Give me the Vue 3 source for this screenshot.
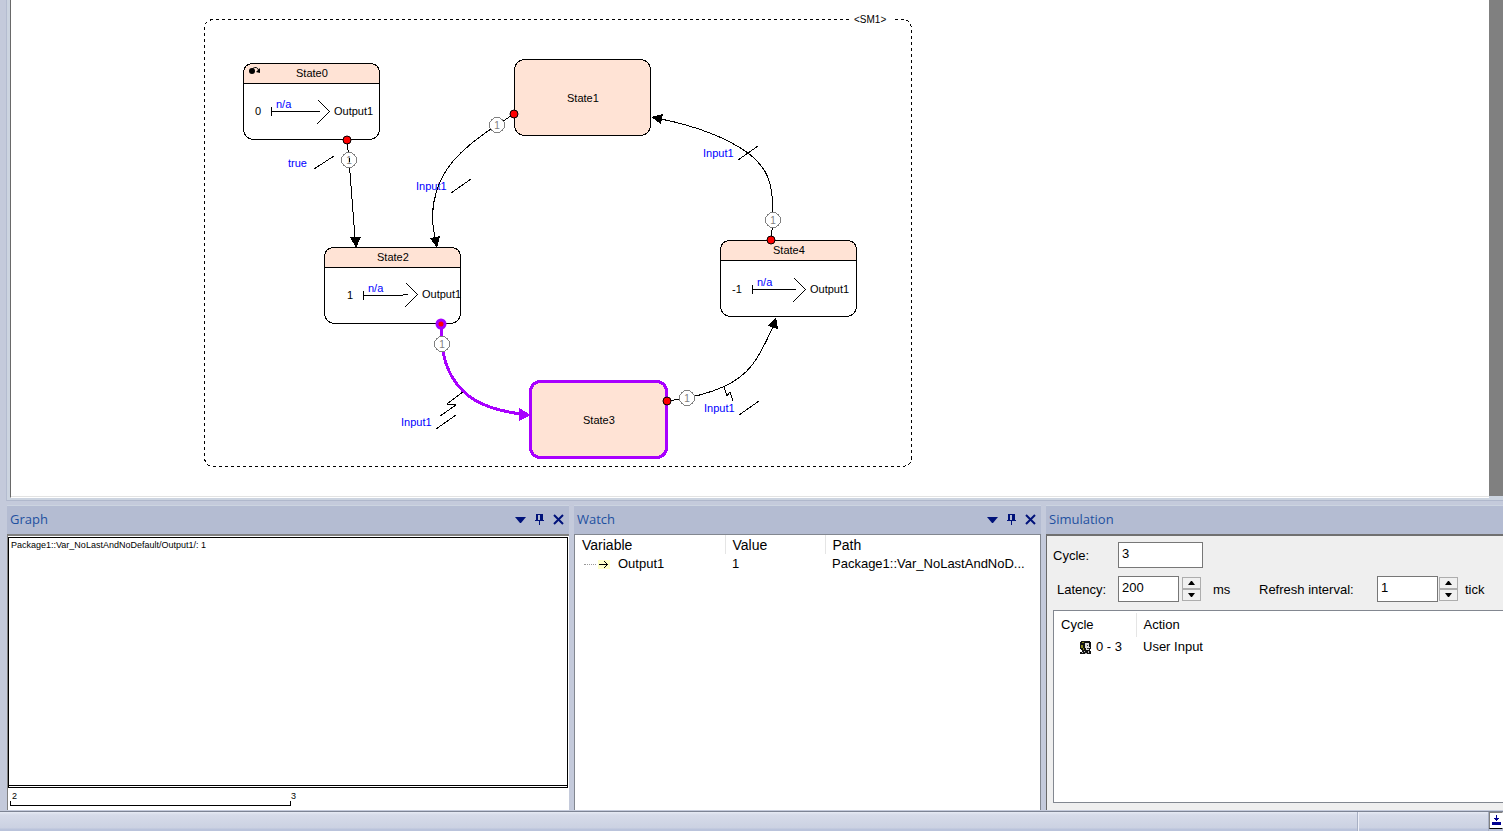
<script setup>
import { ref } from 'vue'

const states = [
  { name: 'State0', x: 243, y: 63, labelX: 296, value: '0', valueX: 255, flow: 271, initial: true },
  { name: 'State1', x: 514, y: 59, labelX: 567 },
  { name: 'State2', x: 324, y: 247, labelX: 377, value: '1', valueX: 347, flow: 363 },
  { name: 'State3', x: 530, y: 381, labelX: 583, active: true },
  { name: 'State4', x: 720, y: 240, labelX: 773, value: '-1', valueX: 732, flow: 752 },
]

const flows = [
  { line: 'M271.5 107V116M271 111.5H320', head: 'M318 100L329.5 111.5L317 124', na: [276, 108], out: [334, 115] },
  { line: 'M363.5 291V300M363 295.5H403M403 294.5H408', head: 'M406 283L417.5 294.5L405 307', na: [368, 292], out: [422, 298] },
  { line: 'M752.5 285V294M752 289.5H796', head: 'M794 278L805.5 289.5L793 302', na: [757, 286], out: [810, 293] },
]

const edges = [
  { path: 'M347 140L349 160L355 238', head: '350,237 361,237 356,248', dot: [347, 140], badge: [349, 160], label: 'true', at: [288, 167], slash: 'M314 169L334 156' },
  { path: 'M514 114L497 125C455 152 442 172 436 193C431 210 432 225 435 238', head: '430,238 440,236 437,248', dot: [514, 114], badge: [497, 125], label: 'Input1', at: [416, 190], slash: 'M451 193L471 179' },
  { path: 'M441 324L442 344C444 365 451 379 463 391C478 406 500 411 521 414', head: '519,408 531,415 519,421', dot: [441, 324], badge: [442, 344], label: 'Input1', at: [401, 426], slash: 'M436 429L456 415', zigzag: 'M463 392L447 404L456 405L440 416', active: true },
  { path: 'M667 401L687 398C725 390 745 378 757 358C766 343 769 335 773 327', head: '768,326 778,329 776,317', dot: [667, 401], badge: [687, 398], label: 'Input1', at: [704, 412], slash: 'M739 415L759 401', zigzag: 'M724 387L727 396L730 392L733 401' },
  { path: 'M771 240L773 220C774 180 766 167 748 153C727 138 695 126 661 119', head: '651,117 663,114 661,124', dot: [771, 240], badge: [773, 220], label: 'Input1', at: [703, 157], slash: 'M738 160L758 146' },
]

const cycle = ref('3')
const latency = ref(200)
const refresh = ref(1)
</script>

<template>
  <div class="app">
    <main class="workspace">
      <div class="canvas">
        <svg class="diagram" aria-label="State machine SM1">
          <g transform="translate(-11 0)">
            <path class="boundary" d="M849 19.5H214.5Q204.500 19.5 204.500 29.5V456.500Q204.500 466.500 214.500 466.500H901.500Q911.500 466.500 911.500 456.500V29.500Q911.500 19.500 901.500 19.500H893" />
            <text class="machine" x="854" y="23">&lt;SM1&gt;</text>

            <g v-for="s in states" :key="s.name">
              <rect :class="['state', { composite: s.value, active: s.active }]" :x="s.x + 0.5" :y="s.y + 0.5" width="136" height="76" rx="10" />
              <path v-if="s.value" class="cap" :transform="`translate(${s.x} ${s.y})`" d="M0.5 20.5V10.5Q0.5 0.5 10.500 0.5H126.500Q136.500 0.5 136.500 10.500V20.500Z" />
              <text :x="s.labelX" :y="s.value ? s.y + 14 : s.y + 43">{{ s.name }}</text>
              <text v-if="s.value" :x="s.valueX" :y="s.y + (s.name === 'State4' ? 53 : 52)">{{ s.value }}</text>
            </g>
            <g class="initial">
              <circle cx="252" cy="71" r="3" />
              <path class="stroke" d="M252 69Q257 65 259 71" />
              <path d="M256 72L260 73V68Z" />
            </g>

            <g v-for="(f, i) in flows" :key="i">
              <path class="stroke" :d="f.line" />
              <path class="stroke" :d="f.head" />
              <text class="blue" :x="f.na[0]" :y="f.na[1]">n/a</text>
              <text :x="f.out[0]" :y="f.out[1]">Output1</text>
            </g>

            <g v-for="(e, i) in edges" :key="'e' + i" :class="{ live: e.active }">
              <text class="blue" :x="e.at[0]" :y="e.at[1]">{{ e.label }}</text>
              <path class="stroke edge" :d="e.path" />
              <polygon class="head" :points="e.head" />
              <path class="stroke" :d="e.slash" />
              <path v-if="e.zigzag" class="stroke" :d="e.zigzag" />
              <circle class="badge" :cx="e.badge[0]" :cy="e.badge[1]" r="7.5" />
              <text class="order" :x="e.badge[0]" :y="e.badge[1] + 4">1</text>
              <path v-if="i === 0" class="stroke" d="M349 158V162" />
              <circle class="dot" :cx="e.dot[0]" :cy="e.dot[1]" r="4" />
            </g>
          </g>
        </svg>
      </div>
      <div class="backdrop"></div>
    </main>

    <div class="docks">
      <section class="panel graph">
        <header>
          <h2>Graph</h2>
          <button aria-label="Graph menu"><svg width="11" height="11"><path d="M0 3H11L6 9H5Z" /></svg></button>
          <button aria-label="Pin Graph"><svg width="11" height="11"><path d="M2 0H9V6H10V7H6V11H5V7H1V6H2ZM4 1V6H6V1Z" fill-rule="evenodd" /></svg></button>
          <button aria-label="Close Graph"><svg width="11" height="11"><path class="x" d="M1 1L10 10M10 1L1 10" /></svg></button>
        </header>
        <div class="body">
          <div class="plot"><span>Package1::Var_NoLastAndNoDefault/Output1/: 1</span></div>
          <div class="ruler">
            <span>2</span>
            <i></i>
            <span>3</span>
          </div>
        </div>
      </section>

      <section class="panel watch">
        <header>
          <h2>Watch</h2>
          <button aria-label="Watch menu"><svg width="11" height="11"><path d="M0 3H11L6 9H5Z" /></svg></button>
          <button aria-label="Pin Watch"><svg width="11" height="11"><path d="M2 0H9V6H10V7H6V11H5V7H1V6H2ZM4 1V6H6V1Z" fill-rule="evenodd" /></svg></button>
          <button aria-label="Close Watch"><svg width="11" height="11"><path class="x" d="M1 1L10 10M10 1L1 10" /></svg></button>
        </header>
        <div class="body">
          <table>
            <colgroup><col class="c-var"><col class="c-val"><col></colgroup>
            <thead><tr><th>Variable</th><th>Value</th><th>Path</th></tr></thead>
            <tbody>
              <tr>
                <td>
                  <span class="tree">
                    <i class="dots"></i>
                    <svg width="12" height="9"><path d="M1 4.500H10M6 1L9.500 4.500L6 8" /></svg>
                    Output1
                  </span>
                </td>
                <td>1</td>
                <td>Package1::Var_NoLastAndNoD...</td>
              </tr>
            </tbody>
          </table>
        </div>
      </section>

      <section class="panel simulation">
        <header><h2>Simulation</h2></header>
        <div class="body">
          <div class="row">
            <label for="cycle">Cycle:</label>
            <input id="cycle" v-model="cycle" class="wide" type="text">
          </div>
          <div class="row">
            <label for="latency" class="inset">Latency:</label>
            <input id="latency" v-model="latency" type="text">
            <span class="spin">
              <button aria-label="Increase latency" @click="latency++"><svg width="7" height="4"><path d="M0 4H7L4 0H3Z" /></svg></button>
              <button aria-label="Decrease latency" @click="latency--"><svg width="7" height="4"><path d="M0 0H7L4 4H3Z" /></svg></button>
            </span>
            <span class="unit">ms</span>
            <label for="refresh" class="refresh">Refresh interval:</label>
            <input id="refresh" v-model="refresh" type="text">
            <span class="spin tight">
              <button aria-label="Increase interval" @click="refresh++"><svg width="7" height="4"><path d="M0 4H7L4 0H3Z" /></svg></button>
              <button aria-label="Decrease interval" @click="refresh--"><svg width="7" height="4"><path d="M0 0H7L4 4H3Z" /></svg></button>
            </span>
            <span class="tick">tick</span>
          </div>
          <div class="list">
            <table>
              <colgroup><col class="c-cyc"><col></colgroup>
              <thead><tr><th>Cycle</th><th>Action</th></tr></thead>
              <tbody>
                <tr>
                  <td>
                    <span class="user">
                      <svg width="12" height="13" shape-rendering="crispEdges">
                        <path d="M1 0H10V1H11V8H10V10H11V13H0V11H2V9H1V8H0V1H1Z" fill="#111" />
                        <path d="M5 2H9V6H10V7H9V9H6V7H5Z" fill="#ddd" />
                        <path d="M7 4H8V5H7ZM7 7H9V8H7Z" fill="#333" />
                        <path d="M2 1H4V2H2ZM1 4H3V7H1ZM3 7H4V9H3Z" fill="#8a8a20" />
                        <path d="M2 11H3V12H2ZM4 10H5V11H4ZM5 12H7V13H5ZM8 10H9V12H8Z" fill="#bbb" />
                      </svg>
                      0 - 3
                    </span>
                  </td>
                  <td>User Input</td>
                </tr>
              </tbody>
            </table>
          </div>
        </div>
      </section>
    </div>

    <footer class="status">
      <span class="cell"></span>
      <button aria-label="Output to bar">
        <svg width="9" height="11" shape-rendering="crispEdges"><path d="M4 0H5V3H7V4H6V5H5V6H4V5H3V4H2V3H4ZM0 7H9V10H0Z" /></svg>
      </button>
    </footer>
  </div>
</template>

<style>
html, body { margin: 0; background: #c4cadb; }
</style>

<style scoped>
* { box-sizing: border-box; }
.app {
  display: flex; flex-direction: column; min-height: 100vh; overflow: hidden;
  background: #c4cadb; color: #000;
  font: 13px/18px Arial, "Liberation Sans", sans-serif;
}
button { padding: 0; font: inherit; cursor: default; }

.workspace {
  display: flex; margin-left: 6px; padding-left: 3px;
  border-left: 1px solid #b4bcd0; border-bottom: 1px solid #b0b8cc;
  background: #ccd4e0;
}
.canvas { flex: 1; border-left: 1px solid #696969; background: #fff; border-bottom: 1px solid #fff; box-shadow: inset 0 -1px #e3e3e3; margin-bottom: 2px; }
.backdrop { width: 14px; background: #808080; margin-bottom: 4px; }
.diagram { display: block; width: 100%; height: 497px; shape-rendering: crispEdges; }
.diagram text { font-size: 11px; fill: #000; }
.diagram .machine { font-size: 10px; }
.diagram .blue { fill: #00f; }
.diagram .order { font-size: 10px; fill: #808080; text-anchor: middle; }
.boundary { fill: none; stroke: #000; stroke-dasharray: 3 3; }
.state { fill: #ffe3d5; stroke: #000; }
.state.composite { fill: #fff; }
.state.active { stroke: #a800ff; stroke-width: 3; }
.cap { fill: #ffe3d5; stroke: #000; }
.stroke { fill: none; stroke: #000; }
.initial { shape-rendering: geometricPrecision; }
.dot { fill: #f00; stroke: #000; shape-rendering: geometricPrecision; }
.badge { fill: #fff; stroke: #808080; }
.live .edge { stroke: #a800ff; stroke-width: 3; }
.live .head { fill: #a800ff; }
.live .dot { stroke: #a800ff; stroke-width: 3; }

.docks {
  flex: 1; display: grid; gap: 5px; padding: 4px 0 1px 7px;
  grid-template-columns: 562fr 467fr 457fr;
}
.panel { display: flex; flex-direction: column; min-width: 0; border-top: 1px solid #ccd4e0; }
.panel header { display: flex; align-items: center; gap: 8px; height: 28px; padding: 0 5px 2px 3px; background: #b4bcd2; }
.panel h2 { flex: 1; margin: 0; font: 13px/18px "Open Sans", "Noto Sans", sans-serif; color: #1e50a0; }
.panel header button { display: flex; border: 0; background: none; fill: #00127a; }
.x { stroke: #00127a; stroke-width: 2; }
.body { flex: 1; background: #fff; border: 1px solid #828790; }

.graph .body { display: flex; flex-direction: column; border-width: 2px 0 0 1px; border-color: #808080; }
.plot { flex: 1; margin: 1px 1px 0 0; padding: 1px 2px; border: 1px solid #000; border-bottom: 3px double #000; font-size: 9px; line-height: 12px; }
.ruler { display: flex; height: 22px; padding: 2px 4px; font-size: 9px; line-height: 12px; position: relative; }
.ruler i { width: 274px; height: 5px; }
.ruler::after { content: ""; position: absolute; left: 2px; top: 13px; width: 279px; height: 4px; border: 1px solid #000; border-top: 0; }

table { width: 100%; table-layout: fixed; border-collapse: collapse; }
th, td { padding: 0 0 0 7px; text-align: left; font-weight: 400; line-height: 18px; white-space: nowrap; overflow: hidden; }
th + th { border-left: 1px solid #e5e5e5; }
.watch th { font-size: 14px; padding-top: 1px; }
.watch td { padding-top: 1px; }
.c-var { width: 150px; }
.c-val { width: 100px; }
.watch .body { border-bottom: 0; }
.tree { display: flex; align-items: center; }
.dots { width: 12px; margin: 0 2px; border-top: 1px dotted #999; }
.tree svg { margin-right: 8px; background: #ffffc8; fill: none; stroke: #000; }

.simulation .body { display: flex; flex-direction: column; padding: 6px 0 7px 6px; background: #efefef; border-top: 2px solid #707070; border-left-color: #696969; border-right: 0; border-bottom: 0; }
.row { display: flex; align-items: center; height: 26px; margin-bottom: 8px; }
.row label { flex: none; width: 65px; padding-top: 2px; }
.row label.inset { padding-left: 4px; }
.row label.refresh { width: 118px; }
.row input { flex: none; width: 61px; height: 26px; padding: 0 3px 4px; border: 1px solid #777; border-radius: 0; background: #fff; font: inherit; outline: 0; }
.row input.wide { width: 85px; }
.spin { display: flex; flex-direction: column; flex: none; width: 19px; margin: 0 12px 0 3px; }
.spin.tight { margin: 0 7px 0 1px; }
.spin button { display: flex; align-items: center; justify-content: center; height: 12px; border: 1px solid #adadad; background: #f0f0f0; }
.unit { width: 46px; padding-top: 2px; }
.tick { padding-top: 2px; }
.list { flex: 1; border: 1px solid #828790; border-right: 0; background: #fff; padding-top: 2px; }
.list th { line-height: 24px; }
.list td { line-height: 20px; }
.c-cyc { width: 82px; }
.user { display: flex; align-items: center; gap: 4px; padding-left: 19px; }

.status {
  display: flex; justify-content: flex-end; height: 20px; flex: none;
  border-top: 1px solid #7d8494; background: linear-gradient(#e6eaf4, #d6dbe9 3px, #cbd1e2 16px, #bac3db 17px);
}
.cell { width: 132px; border-left: 1px solid #a8b0c4; border-right: 1px solid #a8b0c4; box-shadow: inset 1px 0 #eef0f8; }
.status button { display: flex; justify-content: center; align-items: center; width: 14px; height: 17px; border: 1px solid #808080; border-bottom-color: #000; border-right-color: #fff; background: #fff; fill: #000090; }
</style>
